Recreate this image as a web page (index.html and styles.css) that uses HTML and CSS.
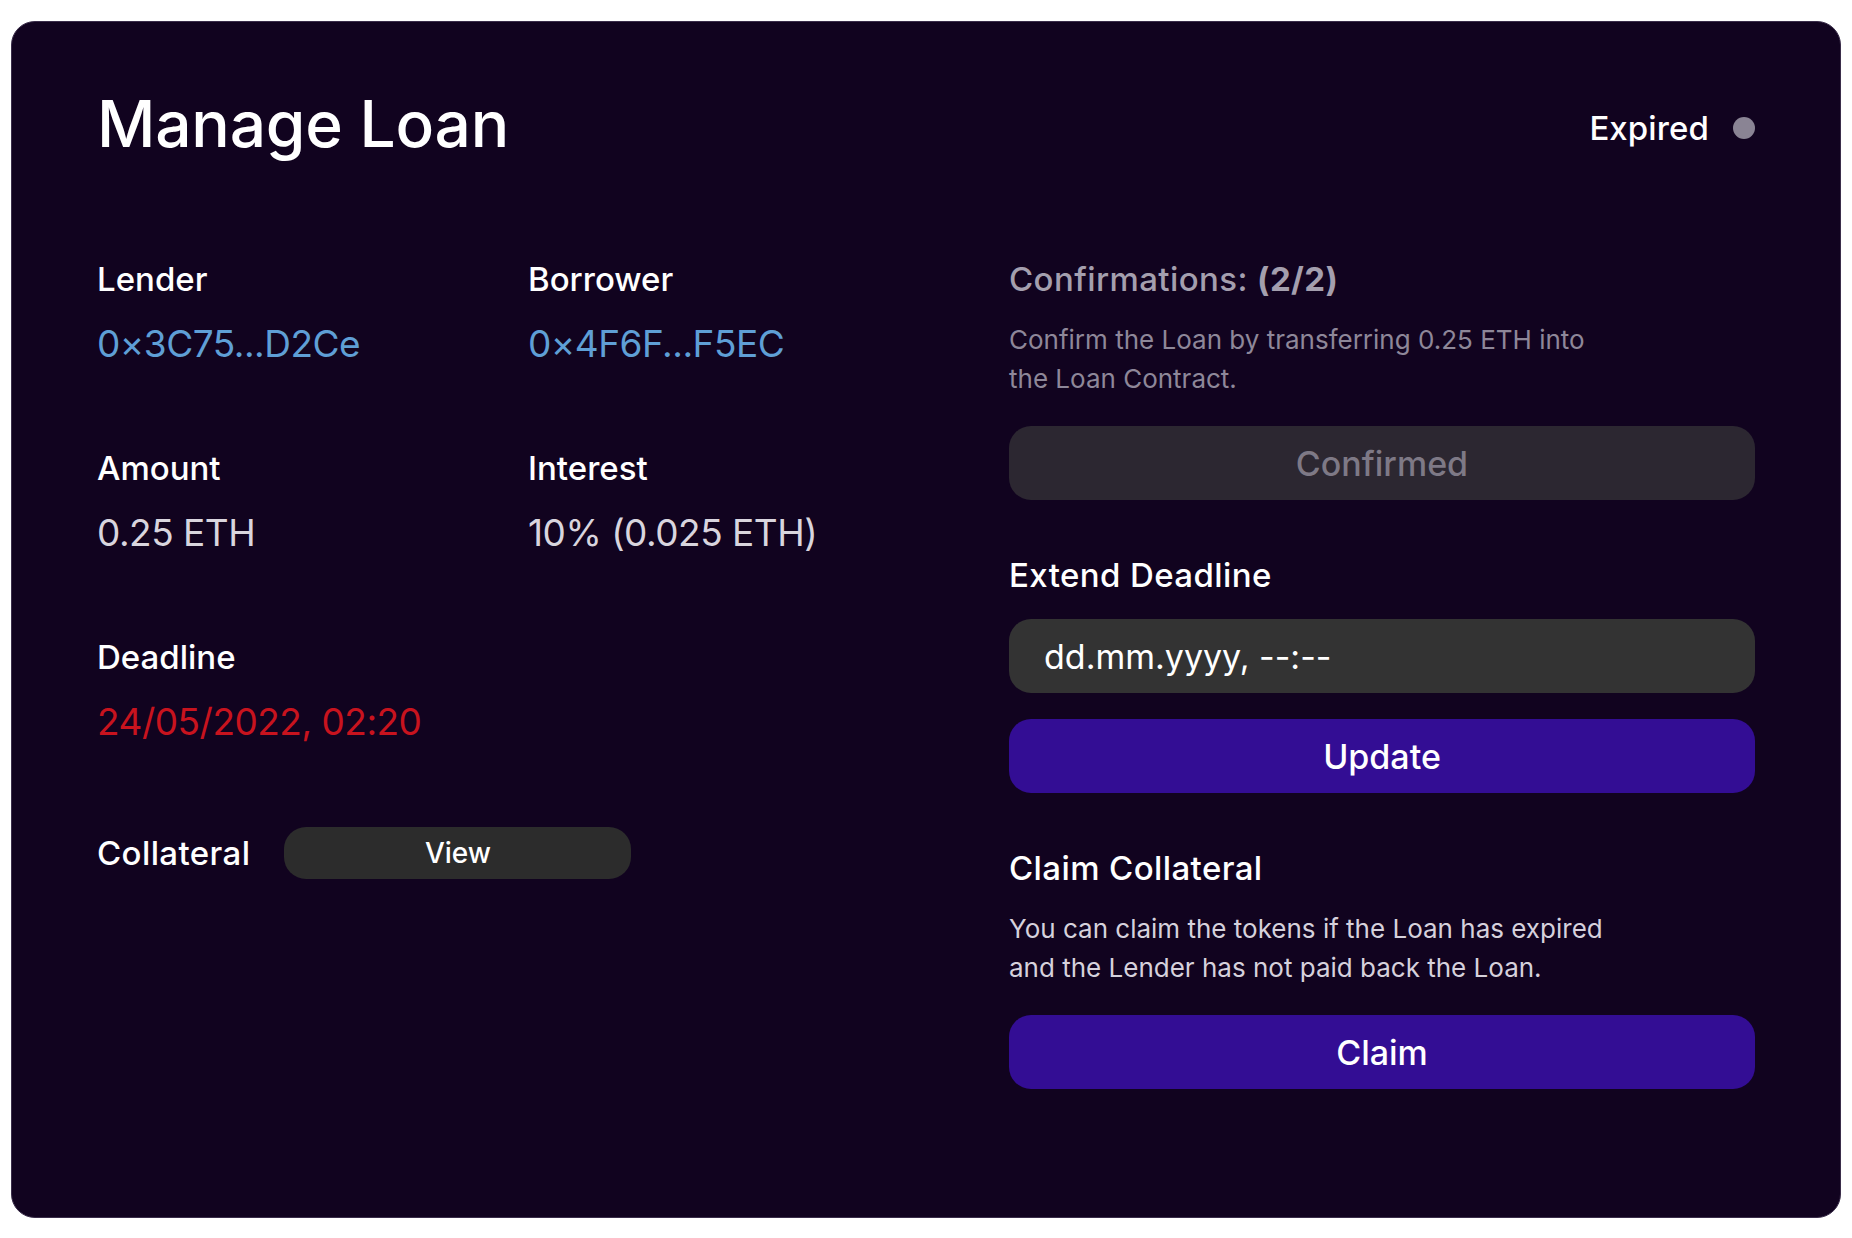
FILE: index.html
```html
<!DOCTYPE html>
<html lang="en">
<head>
<meta charset="utf-8">
<title>Manage Loan</title>
<link rel="stylesheet" href="styles.css">
</head>
<body>
<div class="card">
  <div class="header">
    <h1 class="title">Manage Loan</h1>
    <div class="status">
      <span class="status-text">Expired</span>
      <span class="status-dot"></span>
    </div>
  </div>
  <div class="content">
    <div class="details">
      <div class="grid">
        <div class="field">
          <div class="label">Lender</div>
          <div class="value address">0×3C75...D2Ce</div>
        </div>
        <div class="field">
          <div class="label">Borrower</div>
          <div class="value address">0×4F6F...F5EC</div>
        </div>
        <div class="field">
          <div class="label">Amount</div>
          <div class="value">0.25 ETH</div>
        </div>
        <div class="field">
          <div class="label">Interest</div>
          <div class="value">10% (0.025 ETH)</div>
        </div>
        <div class="field">
          <div class="label">Deadline</div>
          <div class="value expired">24/05/2022, 02:20</div>
        </div>
      </div>
      <div class="collateral">
        <span class="label">Collateral</span>
        <button class="view-btn">View</button>
      </div>
    </div>
    <div class="actions">
      <div class="section">
        <div class="heading muted">Confirmations: <strong>(2/2)</strong></div>
        <p class="desc dim">Confirm the Loan by transferring 0.25 ETH into<br>the Loan Contract.</p>
        <button class="btn btn-disabled">Confirmed</button>
      </div>
      <div class="section">
        <div class="heading">Extend Deadline</div>
        <div class="input">dd.mm.yyyy, --:--</div>
        <button class="btn btn-primary">Update</button>
      </div>
      <div class="section">
        <div class="heading">Claim Collateral</div>
        <p class="desc">You can claim the tokens if the Loan has expired<br>and the Lender has not paid back the Loan.</p>
        <button class="btn btn-primary">Claim</button>
      </div>
    </div>
  </div>
</div>
</body>
</html>
```
FILE: styles.css
```css
* { box-sizing: border-box; }
html, body { margin: 0; padding: 0; background: #ffffff; }
body {
  padding: 21px 11px 20px 11px;
  font-family: "Inter", "Liberation Sans", sans-serif;
  color: #ffffff;
}
.card {
  width: 1830px;
  height: 1197px;
  background: #11031f;
  border-radius: 24px;
  border: 1px solid #3a2d4a;
  padding: 63px 85px 0 85px;
}
.header {
  display: flex;
  justify-content: space-between;
  align-items: center;
  height: 78px;
}
.title {
  margin: 0;
  font-size: 64px;
  font-weight: 500;
  line-height: 78px;
  letter-spacing: -0.2px;
}
.status {
  display: flex;
  align-items: center;
  gap: 24px;
  padding-top: 8px;
}
.status-text {
  font-size: 33px;
  font-weight: 500;
  letter-spacing: 0.1px;
}
.status-dot {
  width: 22px;
  height: 22px;
  border-radius: 50%;
  background: #8a8494;
}
.content {
  display: flex;
  margin-top: 96px;
}
.details {
  width: 912px;
  flex: none;
}
.grid {
  display: grid;
  grid-template-columns: 431px 431px;
  row-gap: 82px;
}
.label {
  font-size: 33px;
  font-weight: 500;
  line-height: 40px;
}
.value {
  margin-top: 23px;
  font-size: 37px;
  line-height: 44px;
  letter-spacing: -0.5px;
  color: #d9d5de;
}
.value.address { color: #5f9fd6; }
.value.expired { color: #c8131e; }
.collateral {
  display: flex;
  align-items: center;
  gap: 34px;
  margin-top: 83px;
}
.collateral .label { letter-spacing: 0.4px; }
.view-btn {
  width: 347px;
  height: 52px;
  border: none;
  border-radius: 22px;
  background: #2c2c2c;
  color: #ffffff;
  font-family: inherit;
  font-size: 28px;
  font-weight: 500;
}
.actions {
  flex: 1;
  display: flex;
  flex-direction: column;
  gap: 55px;
}
.section {
  display: flex;
  flex-direction: column;
}
.heading {
  font-size: 33px;
  font-weight: 500;
  line-height: 40px;
  letter-spacing: 0.4px;
}
.heading.muted { color: #a49fae; }
.heading strong { font-weight: 700; }
.desc {
  margin: 21px 0 28px 0;
  font-size: 26px;
  line-height: 39px;
  color: #d6d1dc;
}
.desc.dim { color: #8e8799; }
.btn {
  height: 74px;
  border: none;
  border-radius: 22px;
  font-family: inherit;
  font-size: 34px;
  font-weight: 500;
}
.btn-disabled {
  background: #2c2731;
  color: #7e7986;
}
.btn-primary {
  background: #330d94;
  color: #ffffff;
}
.input {
  margin: 24px 0 26px 0;
  height: 74px;
  border-radius: 22px;
  background: #333333;
  padding-left: 35px;
  display: flex;
  align-items: center;
  font-size: 34px;
  color: #ffffff;
}
```
